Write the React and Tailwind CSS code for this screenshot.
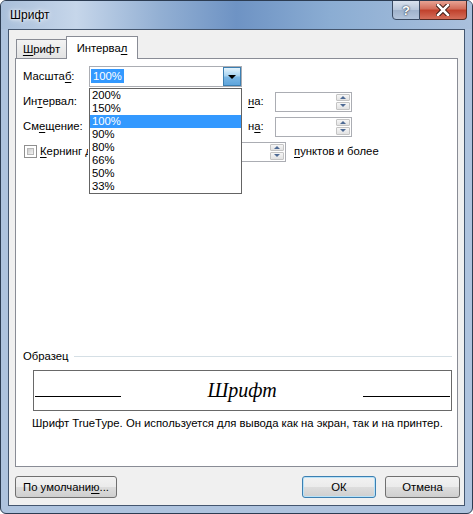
import React from "react";

const U = ({ children }) => <span className="underline underline-offset-[2px] decoration-1">{children}</span>;

function Spinner({ className = "" }) {
  return (
    <div className={"h-[20px] bg-white border border-[#abadb3] flex justify-end " + className}>
      <div className="w-[16px] flex flex-col gap-px p-px">
        <div className="flex-1 flex items-center justify-center bg-[linear-gradient(#f6f6f6,#e2e2e2)] border border-[#c4c4c4] rounded-[1px]">
          <div className="w-0 h-0 border-l-[3px] border-r-[3px] border-b-[3px] border-l-transparent border-r-transparent border-b-[#4e6a94]" />
        </div>
        <div className="flex-1 flex items-center justify-center bg-[linear-gradient(#f6f6f6,#e2e2e2)] border border-[#c4c4c4] rounded-[1px]">
          <div className="w-0 h-0 border-l-[3px] border-r-[3px] border-t-[3px] border-l-transparent border-r-transparent border-t-[#4e6a94]" />
        </div>
      </div>
    </div>
  );
}

// combo hidden under the open list
function Combo() {
  return <div className="w-[153px] h-[21px] bg-white border border-[#abadb3]" />;
}

const scales = ["200%", "150%", "100%", "90%", "80%", "66%", "50%", "33%"];

export default function App() {
  return (
    <div className="w-[473px] h-[514px] font-['Liberation_Sans',Arial,sans-serif] text-[11.3px] text-black leading-[13px]">
      <div className="w-full h-full rounded-[6px] border border-[#2c3c52] bg-[#aec3de] flex flex-col overflow-hidden">
        {/* title bar */}
        <div className="h-[28px] flex items-start bg-[linear-gradient(to_right,#a9bfda,#c6d6ea_16%,#92afd3_34%,#6e93c4_50%,#8badd3_70%,#aac0dc)]">
          <div className="pl-[9px] pt-[8px] text-[12px] [text-shadow:0_0_6px_#fff,0_0_3px_#fff]">Шрифт</div>
          <div className="ml-auto mr-[5px] -mt-px flex">
            <div className="w-[28px] h-[20px] rounded-bl-[4px] border border-[#3a4b63] bg-[linear-gradient(#d9e2ee,#b7c6da_50%,#9fb2cb_50%,#b4c5dc)] flex items-center justify-center text-white text-[13px] font-bold [text-shadow:0_0_2px_#2a3a50,0_0_1px_#2a3a50]">?</div>
            <div className="w-[47px] h-[20px] rounded-br-[4px] border border-l-0 border-[#5a2a22] bg-[linear-gradient(#e8a394,#d26b58_45%,#c0402b_50%,#d46e5a)] flex items-center justify-center">
              <svg width="14" height="12" viewBox="0 0 14 12">
                <path d="M2 1 L12 11 M12 1 L2 11" stroke="#3b1a14" strokeWidth="4.5" strokeLinecap="square" />
                <path d="M2 1 L12 11 M12 1 L2 11" stroke="#fff" strokeWidth="2.5" strokeLinecap="square" />
              </svg>
            </div>
          </div>
        </div>

        {/* client area */}
        <div className="mx-[7px] h-[477px] border border-[#44566f] bg-[#f0f0f0] flex flex-col">
          {/* tabs */}
          <div className="mt-[6px] ml-[7px] h-[22px] flex items-end">
            <div className="w-[51px] h-[19px] border border-b-0 border-[#898c95] bg-[linear-gradient(#f3f3f3,#e3e3e3)] flex items-center justify-center">
              <span><U>Ш</U>рифт</span>
            </div>
            <div className="-ml-px w-[72px] h-[23px] -mb-px relative z-10 border border-b-0 border-[#898c95] bg-white flex items-center justify-center">
              <span>Интерва<U>л</U></span>
            </div>
          </div>

          {/* panel */}
          <div className="mx-[6px] h-[409px] border border-[#898c95] bg-white relative flex flex-col">
            <div className="pt-[7px] pl-[7px] flex flex-col gap-[4px]">
              <div className="h-[21px] flex items-center">
                <div className="w-[66px]">Масшта<U>б</U>:</div>
                <div className="w-[153px] h-[21px] bg-white border border-[#abadb3] flex items-center">
                  <div className="flex-1 pl-px">
                    <span className="bg-[#3399ff] text-white px-[2px] py-[1px]">100%</span>
                  </div>
                  <div className="w-[18px] h-[19px] border border-[#3c7fb1] bg-[linear-gradient(#e3f3fc,#a9d4f1_45%,#79b6e4_55%,#5fa5dc)] flex items-center justify-center">
                    <div className="w-0 h-0 border-l-[4px] border-r-[4px] border-t-[4px] border-l-transparent border-r-transparent border-t-black" />
                  </div>
                </div>
              </div>
              <div className="h-[21px] flex items-center">
                <div className="w-[66px]">Ин<U>т</U>ервал:</div>
                <Combo />
                <div className="ml-[6px] w-[27px]"><U>н</U>а:</div>
                <Spinner className="w-[77px]" />
              </div>
              <div className="h-[21px] flex items-center">
                <div className="w-[66px]">См<U>е</U>щение:</div>
                <Combo />
                <div className="ml-[6px] w-[27px]">н<U>а</U>:</div>
                <Spinner className="w-[77px]" />
              </div>
              <div className="h-[21px] flex items-center">
                <div className="w-[182px] flex items-center">
                  <div className="ml-[1px] w-[13px] h-[13px] border border-[#8f8f8f] bg-white p-[2px] shrink-0">
                    <div className="w-full h-full border border-[#b8b8b8] bg-[linear-gradient(135deg,#cbcbcb,#f4f4f4)]" />
                  </div>
                  <div className="ml-[3px] w-[48px] overflow-hidden whitespace-nowrap"><U>К</U>ернинг д</div>
                </div>
                <Spinner className="w-[81px]" />
                <div className="ml-[8px]"><U>п</U>унктов и более</div>
              </div>
            </div>

            {/* dropdown list */}
            <div className="absolute left-[73px] top-[29px] w-[153px] border border-[#646464] bg-white z-20 flex flex-col">
              {scales.map((s) => (
                <div key={s} className={"h-[13px] pl-[2px] flex items-center " + (s === "100%" ? "bg-[#3399ff] text-white" : "")}>
                  {s}
                </div>
              ))}
            </div>

            {/* sample */}
            <div className="mt-auto mb-[36px] pl-[7px] pr-[5px] flex flex-col">
              <div className="h-[13px] flex items-center">
                <span>Образец</span>
                <div className="flex-1 h-px bg-[#d5dfe5] ml-[5px]" />
              </div>
              <div className="mt-[7px] ml-[10px] h-[41px] border border-[#696969] flex items-end pb-[13px]">
                <div className="ml-[1px] w-[86px] h-px bg-black" />
                <div className="flex-1 text-center font-['Liberation_Serif',serif] italic text-[20px] leading-[20px] mb-[-3px]">Шрифт</div>
                <div className="mr-px w-[87px] h-px bg-black" />
              </div>
              <div className="mt-[6px] ml-[9px]">Шрифт TrueType. Он используется для вывода как на экран, так и на принтер.</div>
            </div>
          </div>

          {/* buttons */}
          <div className="mt-[9px] ml-[6px] mr-[4px] flex">
            <button className="w-[102px] h-[22px] rounded-[3px] border border-[#707070] bg-[linear-gradient(#f2f2f2,#ebebeb_50%,#dddddd_50%,#cfcfcf)]">
              По умолчани<U>ю</U>...
            </button>
            <button className="ml-auto w-[74px] h-[22px] rounded-[3px] border border-[#3c7fb1] shadow-[inset_0_0_0_1px_#b8e2f8] bg-[linear-gradient(#f2f2f2,#ebebeb_50%,#dddddd_50%,#cfcfcf)]">
              ОК
            </button>
            <button className="ml-[9px] w-[75px] h-[22px] rounded-[3px] border border-[#707070] bg-[linear-gradient(#f2f2f2,#ebebeb_50%,#dddddd_50%,#cfcfcf)]">
              Отмена
            </button>
          </div>
        </div>
      </div>
    </div>
  );
}
